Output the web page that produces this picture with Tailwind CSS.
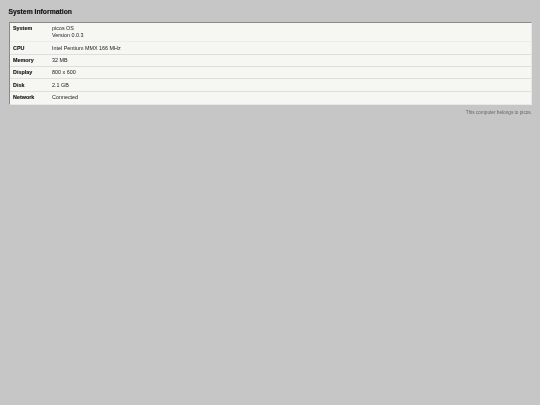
<!DOCTYPE html>
<html><head><meta charset="utf-8"><script src="https://cdn.jsdelivr.net/npm/@tailwindcss/browser@4"></script></head>
<body class="bg-[#c6c6c6] font-['Liberation_Sans',Arial,sans-serif] w-[540px] h-[405px] overflow-hidden">
<main class="px-[8.5px] pt-[7px] blur-[0.25px]">
<h1 class="text-[6.8px] leading-[9px] font-bold text-[#111] h-[15px] [-webkit-text-stroke:0.15px_#111]">System Information</h1>
<div class="border-t border-l border-t-[#8a8a8a] border-l-[#8a8a8a] bg-[#f6f6f2] text-[5.4px] leading-[6.75px] text-[#222] w-[523.5px] border-r border-b border-r-[#e8e8e8] border-b-[#e8e8e8]">
<div class="flex h-[19px] pt-[2.25px] pl-[3.5px] border-b border-[#ececea]"><div class="w-[39px] font-bold text-[#111] [-webkit-text-stroke:0.1px_#111]">System</div><div>picos OS<br>Version 0.0.3</div></div>
<div class="flex items-center h-[12.75px] pl-[3.5px] pt-[0.5px] border-b border-[#dededa]"><div class="w-[39px] font-bold text-[#111] [-webkit-text-stroke:0.1px_#111]">CPU</div><div>Intel Pentium MMX 166 MHz</div></div>
<div class="flex items-center h-[12px] pl-[3.5px] border-b border-[#dededa]"><div class="w-[39px] font-bold text-[#111] [-webkit-text-stroke:0.1px_#111]">Memory</div><div>32 MB</div></div>
<div class="flex items-center h-[12.25px] pl-[3.5px] border-b border-[#dededa]"><div class="w-[39px] font-bold text-[#111] [-webkit-text-stroke:0.1px_#111]">Display</div><div>800 x 600</div></div>
<div class="flex items-center h-[12.5px] pl-[3.5px] pt-[0.5px] border-b border-[#dededa]"><div class="w-[39px] font-bold text-[#111] [-webkit-text-stroke:0.1px_#111]">Disk</div><div>2.1 GB</div></div>
<div class="flex items-center h-[12.5px] pl-[3.5px]"><div class="w-[39px] font-bold text-[#111] [-webkit-text-stroke:0.1px_#111]">Network</div><div>Connected</div></div>
</div>
<p class="text-[4.7px] leading-[6px] text-[#666] text-right w-[523.5px] pt-[4.5px]">This computer belongs to picos.</p>
</main>
</body></html>
